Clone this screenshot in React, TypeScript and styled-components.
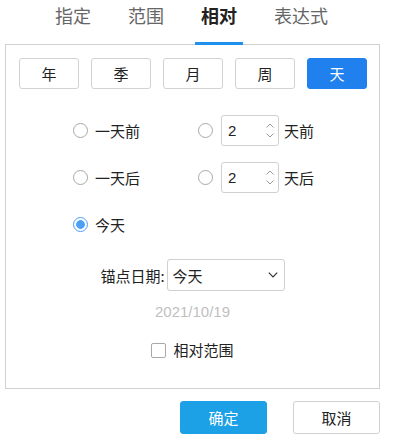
import React, { FC, useState } from 'react';
import styled, { createGlobalStyle, css } from 'styled-components';

const GlobalStyle = createGlobalStyle`
  html, body {
    margin: 0;
    padding: 0;
    background: #fff;
  }
  body {
    font-family: "Liberation Sans", "Noto Sans CJK SC", sans-serif;
    color: #333;
  }
`;

const Wrapper = styled.div`
  width: 394px;
  height: 438px;
  overflow: hidden;
`;

const TabBar = styled.div`
  position: relative;
  z-index: 1;
  display: flex;
  gap: 25px;
  padding-left: 49px;
  height: 45px;
`;

const Tab = styled.div<{ $active?: boolean }>`
  padding: 5px 6px 0;
  height: 37px;
  font-size: 18px;
  line-height: 24px;
  color: #666;
  border-bottom: 3px solid transparent;
  cursor: pointer;

  ${({ $active }) => $active && css`
    color: #222;
    font-weight: bold;
    border-bottom-color: #1e90f0;
  `}
`;

const Panel = styled.div`
  box-sizing: border-box;
  margin: -1px 14px 0 5px;
  height: 345px;
  border: 1px solid #d0d0d0;
  padding-top: 13px;
`;

const UnitRow = styled.div`
  display: flex;
  gap: 12px;
  padding: 0 12px 0 13px;
`;

const UnitButton = styled.button<{ $active?: boolean }>`
  flex: 1;
  height: 31px;
  border: 1px solid #d2d2d2;
  border-radius: 3px;
  background: #fff;
  color: #222;
  font-family: "Noto Sans CJK SC", sans-serif;
  font-size: 15px;
  padding: 0;
  cursor: pointer;

  ${({ $active }) => $active && css`
    background: #1f80ee;
    border-color: #1f80ee;
    color: #fff;
  `}
`;

const RadioGrid = styled.div`
  display: grid;
  grid-template-columns: 125px auto;
  row-gap: 16px;
  margin-top: 26px;
  padding-left: 67px;
`;

const Option = styled.label`
  display: flex;
  align-items: center;
  height: 31px;
  font-family: "Noto Sans CJK SC", sans-serif;
  font-size: 15px;
  color: #222;
  cursor: pointer;
`;

const RadioCircle = styled.span<{ $checked?: boolean }>`
  box-sizing: border-box;
  width: 15px;
  height: 15px;
  border-radius: 50%;
  border: 1px solid #a8a8a8;
  margin-right: 7px;
  flex-shrink: 0;
  background: #fff;

  ${({ $checked }) => $checked && css`
    border: 1px solid #4a9ff6;
    background: radial-gradient(circle, #4a9ff6 0 4px, #fff 4.6px);
  `}
`;

const NumberBox = styled.div`
  box-sizing: border-box;
  display: flex;
  align-items: center;
  width: 58px;
  height: 31px;
  margin: 0 5px 0 1px;
  border: 1px solid #d0d0d0;
  border-radius: 3px;
  padding-left: 6px;
  font-family: "Liberation Sans", sans-serif;
  font-size: 15px;
  color: #222;
`;

const NumberValue = styled.span`
  flex: 1;
`;

const Spinner = styled.span`
  display: flex;
  flex-direction: column;
  gap: 5px;
  margin-right: 4px;
`;

const SelectRow = styled.div`
  display: flex;
  justify-content: center;
  align-items: center;
  gap: 2px;
  margin-top: 19px;
  font-family: "Noto Sans CJK SC", sans-serif;
  font-size: 15px;
  color: #222;
`;

const SelectBox = styled.div`
  box-sizing: border-box;
  display: flex;
  align-items: center;
  justify-content: space-between;
  width: 118px;
  height: 32px;
  border: 1px solid #d0d0d0;
  border-radius: 3px;
  padding: 0 6px 0 5px;
  font-size: 15px;
`;

const DateText = styled.div`
  margin-top: 11px;
  text-align: center;
  line-height: 20px;
  font-size: 15px;
  color: #c0c0c0;
`;

const CheckRow = styled.label`
  display: flex;
  justify-content: center;
  align-items: center;
  gap: 7px;
  margin-top: 18px;
  line-height: 20px;
  font-family: "Noto Sans CJK SC", sans-serif;
  font-size: 15px;
  color: #222;
`;

const CheckBox = styled.span`
  box-sizing: border-box;
  width: 15px;
  height: 15px;
  border: 1px solid #a8a8a8;
  border-radius: 2px;
  background: #fff;
`;

const Footer = styled.div`
  display: flex;
  justify-content: flex-end;
  gap: 26px;
  margin-top: 12px;
  padding-right: 14px;
`;

const FooterButton = styled.button<{ $primary?: boolean }>`
  width: 87px;
  height: 33px;
  border-radius: 3px;
  border: 1px solid #d0d0d0;
  background: #fff;
  color: #222;
  font-family: "Noto Sans CJK SC", sans-serif;
  font-size: 15px;
  padding: 0;
  cursor: pointer;

  ${({ $primary }) => $primary && css`
    background: #1ca0e6;
    border-color: #1ca0e6;
    color: #fff;
  `}
`;

const Chevron: FC<{ up?: boolean; size?: number; color?: string }> = ({ up, size = 8, color = '#999' }) => (
  <svg width={size} height={size / 2 + 1} viewBox="0 0 8 5" fill="none">
    <path
      d={up ? 'M0.5 4.5 L4 1 L7.5 4.5' : 'M0.5 0.5 L4 4 L7.5 0.5'}
      stroke={color}
      strokeWidth="1"
    />
  </svg>
);

const NumberInput: FC<{ value: number }> = ({ value }) => (
  <NumberBox>
    <NumberValue>{value}</NumberValue>
    <Spinner>
      <Chevron up />
      <Chevron />
    </Spinner>
  </NumberBox>
);

const tabs = ['指定', '范围', '相对', '表达式'];
const units = ['年', '季', '月', '周', '天'];

const App: FC = () => {
  const [tab, setTab] = useState('相对');
  const [unit, setUnit] = useState('天');
  const [choice, setChoice] = useState('today');

  return (
    <Wrapper>
      <GlobalStyle />
      <TabBar>
        {tabs.map((t) => (
          <Tab key={t} $active={t === tab} onClick={() => setTab(t)}>{t}</Tab>
        ))}
      </TabBar>

      <Panel>
        <UnitRow>
          {units.map((u) => (
            <UnitButton key={u} $active={u === unit} onClick={() => setUnit(u)}>{u}</UnitButton>
          ))}
        </UnitRow>

        <RadioGrid>
          <Option onClick={() => setChoice('prev')}>
            <RadioCircle $checked={choice === 'prev'} />一天前
          </Option>
          <Option onClick={() => setChoice('prevN')}>
            <RadioCircle $checked={choice === 'prevN'} />
            <NumberInput value={2} />天前
          </Option>
          <Option onClick={() => setChoice('next')}>
            <RadioCircle $checked={choice === 'next'} />一天后
          </Option>
          <Option onClick={() => setChoice('nextN')}>
            <RadioCircle $checked={choice === 'nextN'} />
            <NumberInput value={2} />天后
          </Option>
          <Option onClick={() => setChoice('today')}>
            <RadioCircle $checked={choice === 'today'} />今天
          </Option>
        </RadioGrid>

        <SelectRow>
          <span>锚点日期:</span>
          <SelectBox>
            <span>今天</span>
            <Chevron size={10} color="#333" />
          </SelectBox>
        </SelectRow>

        <DateText>2021/10/19</DateText>

        <CheckRow>
          <CheckBox />相对范围
        </CheckRow>
      </Panel>

      <Footer>
        <FooterButton $primary>确定</FooterButton>
        <FooterButton>取消</FooterButton>
      </Footer>
    </Wrapper>
  );
};

export default App;
